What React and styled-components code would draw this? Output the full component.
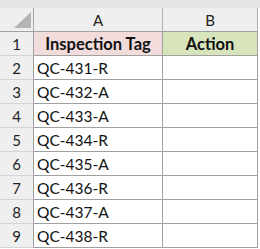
import React from 'react';
import styled, { createGlobalStyle } from 'styled-components';

const GlobalStyle = createGlobalStyle`
  body {
    margin: 0;
    background: #ffffff;
    font-family: Lato, 'Liberation Sans', sans-serif;
  }
`;

const Sheet = styled.div`
  width: 260px;
  height: 249px;
  overflow: hidden;
  background: #ffffff;
`;

const TopStrip = styled.div`
  height: 8px;
  background: #e6e6e9;
`;

const Row = styled.div`
  display: grid;
  grid-template-columns: 34px 129px 95px;
  height: ${({ $h }) => $h}px;
`;

const Corner = styled.div`
  position: relative;
  background: #efefef;
  border-right: 1px solid #a8a8a8;
  border-bottom: 1px solid #a0a0a0;
  &::after {
    content: '';
    position: absolute;
    right: 2px;
    bottom: 3px;
    width: 0;
    height: 0;
    border-left: 17px solid transparent;
    border-bottom: 16px solid #b4b4b4;
  }
`;

const ColHead = styled.div`
  display: flex;
  align-items: center;
  justify-content: center;
  background: #efefef;
  border-right: 1px solid #b0b0b0;
  border-bottom: 1px solid #a0a0a0;
  font-size: 15px;
  color: #222;
`;

const RowHead = styled.div`
  display: flex;
  align-items: center;
  justify-content: center;
  background: #efefef;
  border-right: 1px solid #a0a0a0;
  border-bottom: 1px solid #d4d4d4;
  font-size: 15px;
  color: #222;
`;

const Cell = styled.div`
  display: flex;
  align-items: center;
  justify-content: ${({ $center }) => ($center ? 'center' : 'flex-start')};
  padding-left: ${({ $center }) => ($center ? 0 : 3)}px;
  background: ${({ $bg }) => $bg || '#ffffff'};
  border-right: 1px solid #a0a0a0;
  border-bottom: 1px solid #a0a0a0;
  font-size: ${({ $bold }) => ($bold ? 16.5 : 15.5)}px;
  font-weight: ${({ $bold }) => ($bold ? 700 : 400)};
  color: #111;
  white-space: nowrap;
`;

const tags = [
  'QC-431-R',
  'QC-432-A',
  'QC-433-A',
  'QC-434-R',
  'QC-435-A',
  'QC-436-R',
  'QC-437-A',
  'QC-438-R',
];

export default function App() {
  return (
    <Sheet>
      <GlobalStyle />
      <TopStrip />
      <Row $h={24}>
        <Corner />
        <ColHead>A</ColHead>
        <ColHead>B</ColHead>
      </Row>
      <Row $h={24}>
        <RowHead>1</RowHead>
        <Cell $center $bold $bg="#f2dcdb">Inspection Tag</Cell>
        <Cell $center $bold $bg="#d8e4bc">Action</Cell>
      </Row>
      {tags.map((tag, i) => (
        <Row $h={24} key={tag}>
          <RowHead>{i + 2}</RowHead>
          <Cell>{tag}</Cell>
          <Cell />
        </Row>
      ))}
    </Sheet>
  );
}
